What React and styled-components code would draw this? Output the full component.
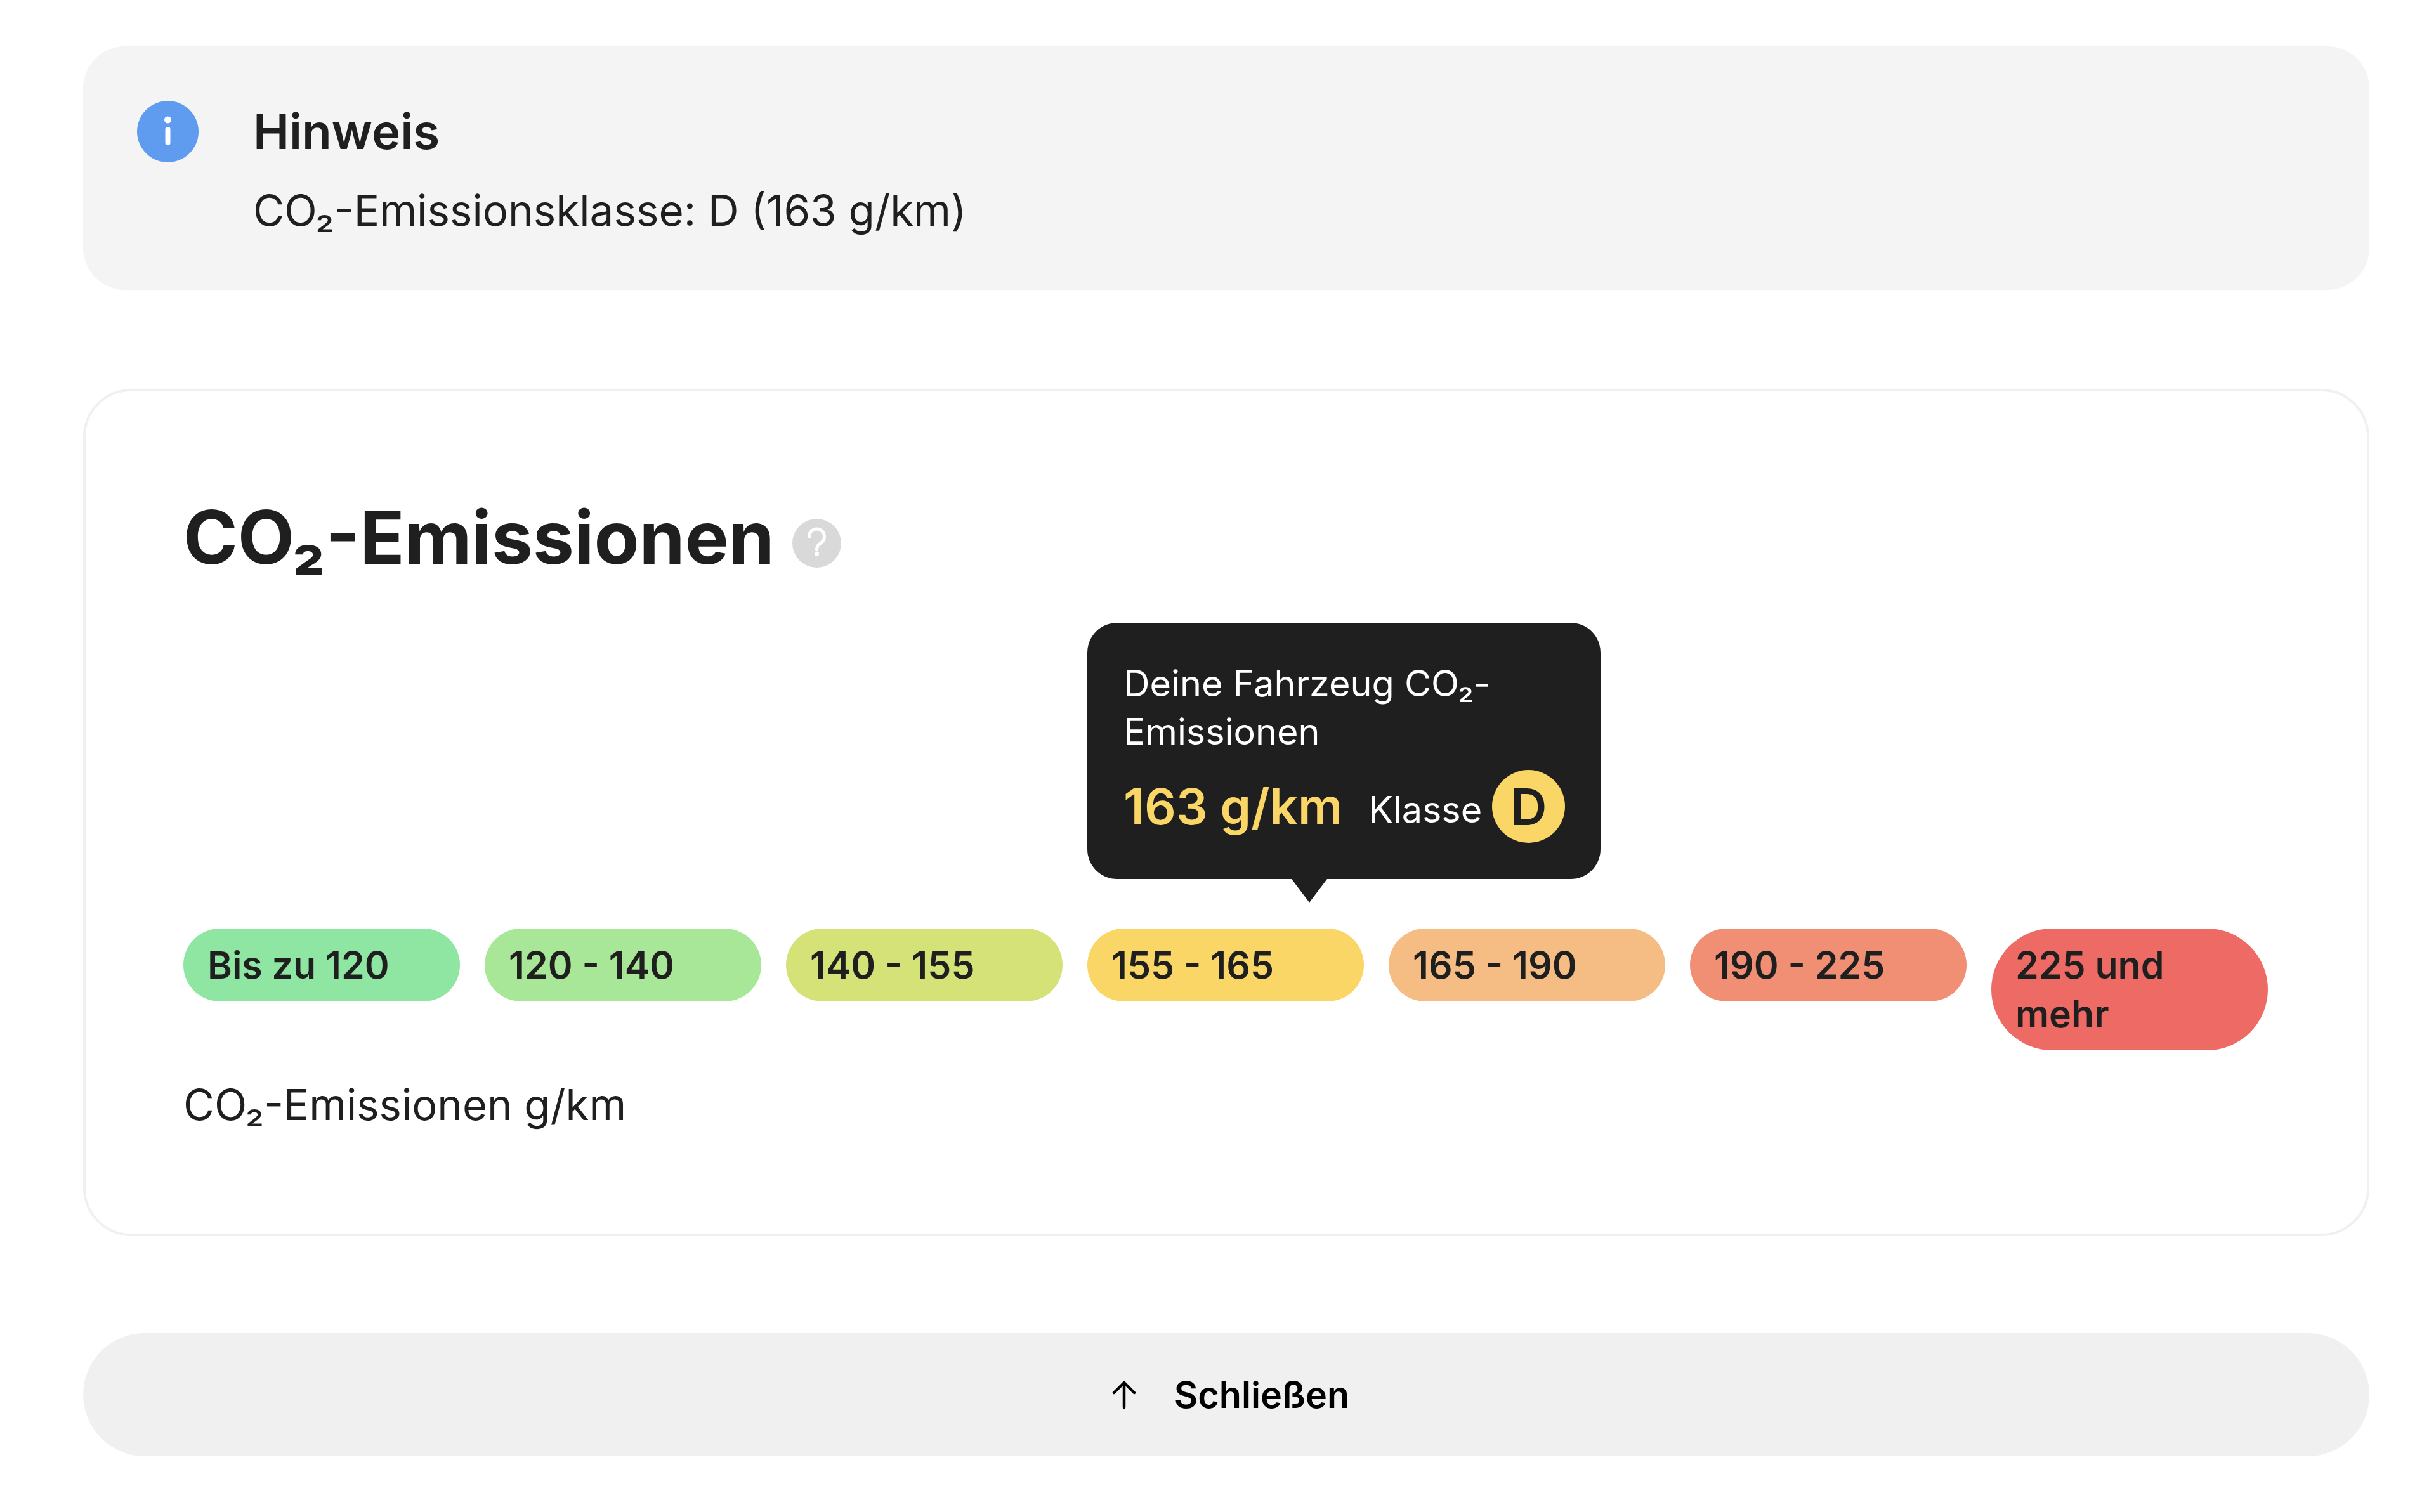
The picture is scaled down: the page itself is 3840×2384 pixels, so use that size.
import React from 'react'
import styled, { createGlobalStyle } from 'styled-components'

const GlobalStyle = createGlobalStyle`
  html, body {
    margin: 0;
    background: #fff;
  }
  body {
    font-family: Inter, "Noto Sans", sans-serif;
    color: #1f1f1f;
  }
`

const Page = styled.div`
  padding: 73px 105px 88px 131px;
  display: flex;
  flex-direction: column;
`

const Hint = styled.section`
  display: flex;
  gap: 86px;
  padding: 96px 85px 0;
  height: 384px;
  box-sizing: border-box;
  background: #f4f4f4;
  border-radius: 66px;
`

const InfoIcon = styled.svg`
  width: 97px;
  height: 97px;
  flex: none;
  margin-top: -10px;
`

const HintBody = styled.div`
  display: flex;
  flex-direction: column;
  gap: 49px;
`

const HintTitle = styled.div`
  font-size: 76.5px;
  line-height: 76px;
  font-weight: 600;
`

const HintText = styled.div`
  font-size: 67.3px;
  line-height: 76px;
`

const Card = styled.section`
  margin-top: 156px;
  border: 4px solid #f0f0f0;
  border-radius: 76px;
  padding: 155px 156px 164px 154px;
`

const TitleRow = styled.div`
  display: flex;
  align-items: center;
  gap: 28px;
  height: 152px;
`

const Title = styled.h2`
  margin: -3px 0 0;
  font-size: 116px;
  line-height: 150px;
  font-weight: 700;
`

const HelpIcon = styled.svg`
  width: 77px;
  height: 77px;
  flex: none;
  margin-top: 17px;
`

const Scale = styled.div`
  display: grid;
  grid-template-columns: repeat(7, 1fr);
  gap: 39px;
  align-items: start;
  margin-top: 540px;
`

const PillSlot = styled.div`
  position: relative;
`

const Pill = styled.div`
  padding: 19px 38px;
  border-radius: 96px;
  background: ${p => p.$color};
  font-size: 59px;
  line-height: 77px;
  font-weight: 600;
`

const Tooltip = styled.div`
  position: absolute;
  left: 0;
  bottom: calc(100% + 78px);
  width: 809px;
  height: 404px;
  box-sizing: border-box;
  padding: 57px;
  background: #1f1f1f;
  border-radius: 47px;
  color: #fff;

  &::after {
    content: '';
    position: absolute;
    left: 322px;
    top: 100%;
    border-left: 28px solid transparent;
    border-right: 28px solid transparent;
    border-top: 37px solid #1f1f1f;
  }
`

const TooltipLabel = styled.div`
  font-size: 57.5px;
  line-height: 76px;
`

const TooltipRow = styled.div`
  display: flex;
  align-items: center;
  margin-top: 23px;
`

const TooltipValue = styled.span`
  flex: none;
  white-space: nowrap;
  font-size: 78px;
  font-weight: 600;
  color: #f9d665;
  margin-right: 41px;
`

const ClassLabel = styled.span`
  font-size: 57.5px;
  margin-top: 8px;
  margin-right: 16px;
`

const ClassBadge = styled.span`
  flex: none;
  width: 115px;
  height: 115px;
  border-radius: 50%;
  background: #f9d665;
  color: #1f1f1f;
  font-size: 80px;
  font-weight: 600;
  display: flex;
  align-items: center;
  justify-content: center;
`

const Unit = styled.div`
  margin-top: 47px;
  padding-bottom: 1px;
  font-size: 67px;
  line-height: 77px;
`

const CloseButton = styled.button`
  margin-top: 153px;
  height: 194px;
  border: 0;
  padding: 0 0 0 14px;
  border-radius: 97px;
  background: #f0f0f0;
  color: #000;
  font-family: inherit;
  font-size: 57.5px;
  font-weight: 600;
  display: flex;
  align-items: center;
  justify-content: center;
  gap: 60px;
`

const ArrowIcon = styled.svg`
  width: 38px;
  height: 46px;
`

const ranges = [
  ['Bis zu 120', '#8ee6a2'],
  ['120 - 140', '#a8e698'],
  ['140 - 155', '#d5e278'],
  ['155 - 165', '#f9d665', true],
  ['165 - 190', '#f5bc84'],
  ['190 - 225', '#f18f74'],
  ['225 und mehr', '#ee6a64'],
]

export default function App() {
  return (
    <Page>
      <GlobalStyle />
      <Hint>
        <InfoIcon viewBox="0 0 97 97">
          <circle cx="48.5" cy="48.5" r="48.5" fill="#5f9bef" />
          <circle cx="48.5" cy="30" r="5.5" fill="#fff" />
          <rect x="44.5" y="41" width="8" height="29" rx="4" fill="#fff" />
        </InfoIcon>
        <HintBody>
          <HintTitle>Hinweis</HintTitle>
          <HintText>CO₂-Emissionsklasse: D (163 g/km)</HintText>
        </HintBody>
      </Hint>

      <Card>
        <TitleRow>
          <Title>CO₂-Emissionen</Title>
          <HelpIcon viewBox="0 0 77 77">
            <circle cx="38.5" cy="38.5" r="38.5" fill="#d9d9d9" />
            <path d="M26.5 28.5a12 12 0 1 1 20 8.5c-4.5 3.5-8 5.5-8 11" fill="none" stroke="#fff" strokeWidth="5" strokeLinecap="round" />
            <circle cx="38.5" cy="55" r="3.6" fill="#fff" />
          </HelpIcon>
        </TitleRow>
        <Scale>
          {ranges.map(([label, color, active]) => (
            <PillSlot key={label}>
              {active && (
                <Tooltip>
                  <TooltipLabel>Deine Fahrzeug CO₂-Emissionen</TooltipLabel>
                  <TooltipRow>
                    <TooltipValue>163 g/km</TooltipValue>
                    <ClassLabel>Klasse</ClassLabel>
                    <ClassBadge>D</ClassBadge>
                  </TooltipRow>
                </Tooltip>
              )}
              <Pill $color={color}>{label}</Pill>
            </PillSlot>
          ))}
        </Scale>
        <Unit>CO₂-Emissionen g/km</Unit>
      </Card>

      <CloseButton>
        <ArrowIcon viewBox="0 0 38 46" fill="none" stroke="#000" strokeWidth="4.5" strokeLinecap="round" strokeLinejoin="round">
          <path d="M19 43V4M3 20 19 4l16 16" />
        </ArrowIcon>
        Schließen
      </CloseButton>
    </Page>
  )
}
